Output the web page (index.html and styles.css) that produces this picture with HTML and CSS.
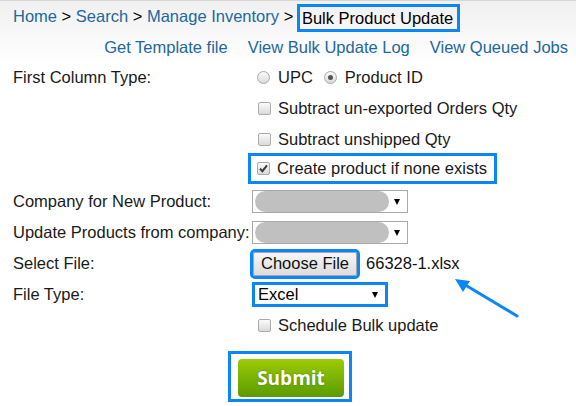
FILE: index.html
```html
<!DOCTYPE html>
<html>
<head>
<meta charset="utf-8">
<title>Bulk Product Update</title>
<link rel="stylesheet" href="styles.css">
</head>
<body>
<div class="page">
  <header class="top">
    <nav class="crumbs"><a href="#">Home</a> <span class="sep">&gt;</span> <a href="#">Search</a> <span class="sep">&gt;</span> <a href="#">Manage Inventory</a> <span class="sep">&gt;</span> <span class="current">Bulk Product Update</span></nav>
    <div class="links"><a href="#">Get Template file</a><a href="#">View Bulk Update Log</a><a href="#">View Queued Jobs</a></div>
  </header>

  <form class="form">
    <div class="label">First Column Type:</div>
    <div class="value"><span class="radio"></span><span class="opt">UPC</span><span class="radio second checked"></span><span class="opt">Product ID</span></div>

    <div class="label"></div>
    <div class="value"><span class="check"></span>Subtract un-exported Orders Qty</div>

    <div class="label"></div>
    <div class="value"><span class="check"></span>Subtract unshipped Qty</div>

    <div class="label"></div>
    <div class="value"><span class="boxed"><span class="check checked"><svg viewBox="0 0 13 13" width="13" height="13"><path d="M3 6.6 L5.4 9.2 L10 3.4" fill="none" stroke="#3a3a3a" stroke-width="2"/></svg></span>Create product if none exists</span></div>

    <div class="label">Company for New Product:</div>
    <div class="value"><div class="select"><span class="redact"></span><span class="caret"></span></div></div>

    <div class="label">Update Products from company:</div>
    <div class="value"><div class="select"><span class="redact"></span><span class="caret"></span></div></div>

    <div class="label">Select File:</div>
    <div class="value"><button type="button" class="choose">Choose File</button><span class="filename">66328-1.xlsx</span></div>

    <div class="label">File Type:</div>
    <div class="value"><div class="select type"><span>Excel</span><span class="caret"></span></div></div>

    <div class="label"></div>
    <div class="value"><span class="check"></span>Schedule Bulk update</div>
  </form>

  <div class="submit-row">
    <div class="submit-box"><button type="button" class="submit">Submit</button></div>
  </div>

  <svg class="arrow" width="90" height="60" viewBox="0 0 90 60">
    <line x1="77" y1="48" x2="22" y2="15" stroke="#0b86f6" stroke-width="3" stroke-linecap="round"/>
    <polygon points="15,11 30,13 23,24" fill="#0b86f6"/>
  </svg>
</div>
</body>
</html>
```

FILE: styles.css
```css
html, body {
  margin: 0;
  padding: 0;
  background: #fff;
}

body {
  font-family: "Liberation Sans", Arial, sans-serif;
  font-size: 16.5px;
  color: #1a1a1a;
}

.page {
  position: relative;
  width: 576px;
  height: 406px;
  overflow: hidden;
}

a {
  color: #23679d;
  text-decoration: none;
}

.top {
  border-top: 1px solid #d6d6d6;
  background: linear-gradient(#f0f0f0, #ffffff 62px);
}

.crumbs {
  height: 31px;
  line-height: 31px;
  padding-left: 13px;
  white-space: nowrap;
}

.sep {
  color: #000;
}

.current {
  display: inline-block;
  line-height: 20px;
  padding: 1px 4px 1px 2px;
  margin-left: 2px;
  outline: 3px solid #0b86f6;
  color: #000;
  vertical-align: top;
  margin-top: 6px;
}

.links {
  height: 30px;
  display: flex;
  justify-content: flex-end;
  align-items: center;
  gap: 20px;
  padding-right: 8px;
  white-space: nowrap;
}

.form {
  display: grid;
  grid-template-columns: 252px 1fr;
  grid-auto-rows: 31px;
  align-items: center;
}

.label {
  padding-left: 13px;
  white-space: nowrap;
}

.value {
  display: flex;
  align-items: center;
  white-space: nowrap;
}

.radio,
.check {
  flex: none;
  box-sizing: border-box;
  width: 13px;
  height: 13px;
  border: 1px solid #ababab;
  background: linear-gradient(#fbfbfb, #dadada);
}

.radio {
  border-radius: 50%;
  margin: 0 8px 0 5px;
  position: relative;
}

.radio.second {
  margin-left: 11px;
}

.radio.checked::after {
  content: "";
  position: absolute;
  left: 3px;
  top: 3px;
  width: 5px;
  height: 5px;
  border-radius: 50%;
  background: #555;
}

.check {
  border-radius: 2px;
  margin: 0 7px 0 6px;
  position: relative;
}

.check svg {
  position: absolute;
  left: -1px;
  top: -1px;
}

.boxed {
  display: inline-flex;
  align-items: center;
  height: 23px;
  padding-right: 6px;
  outline: 3px solid #0b86f6;
  outline-offset: 1px;
  margin-bottom: 4px;
}

.boxed .check {
  margin-left: 5px;
}

.select {
  box-sizing: border-box;
  width: 156px;
  height: 23px;
  border: 1px solid #a9a9a9;
  background: #fff;
  display: flex;
  align-items: center;
  justify-content: space-between;
  padding: 0 7px 0 2px;
}

.redact {
  width: 134px;
  height: 21px;
  border-radius: 11px;
  background: #c0c0c0;
}

.caret {
  width: 0;
  height: 0;
  border-left: 3px solid transparent;
  border-right: 3px solid transparent;
  border-top: 6px solid #000;
}

.select.type {
  width: 136px;
  height: 25px;
  border: 3px solid #0b86f6;
  padding: 0 7px 0 3px;
  color: #000;
}

.choose {
  box-sizing: border-box;
  height: 24px;
  margin-left: 1px;
  padding: 0 7px;
  font-family: inherit;
  font-size: 16.5px;
  color: #111;
  border: 1px solid #a6a6a6;
  border-radius: 2px;
  background: linear-gradient(#f7f7f7, #dcdcdc);
  outline: 3px solid #0b86f6;
}

.filename {
  margin-left: 9px;
  color: #111;
}

.submit-row {
  display: flex;
  padding-left: 228px;
  margin-top: 10px;
}

.submit-box {
  border: 3px solid #0b86f6;
  padding: 5px 5px 2px 7px;
}

.submit {
  display: block;
  width: 106px;
  height: 38px;
  border: 0;
  border-radius: 4px;
  background: linear-gradient(#9ccb06, #5a9b00);
  color: #fff;
  font-family: "Open Sans", "Liberation Sans", sans-serif;
  font-weight: bold;
  font-size: 19px;
  text-shadow: 0 0 2px rgba(0, 0, 0, 0.35);
}

.arrow {
  position: absolute;
  left: 440px;
  top: 268px;
}
```
